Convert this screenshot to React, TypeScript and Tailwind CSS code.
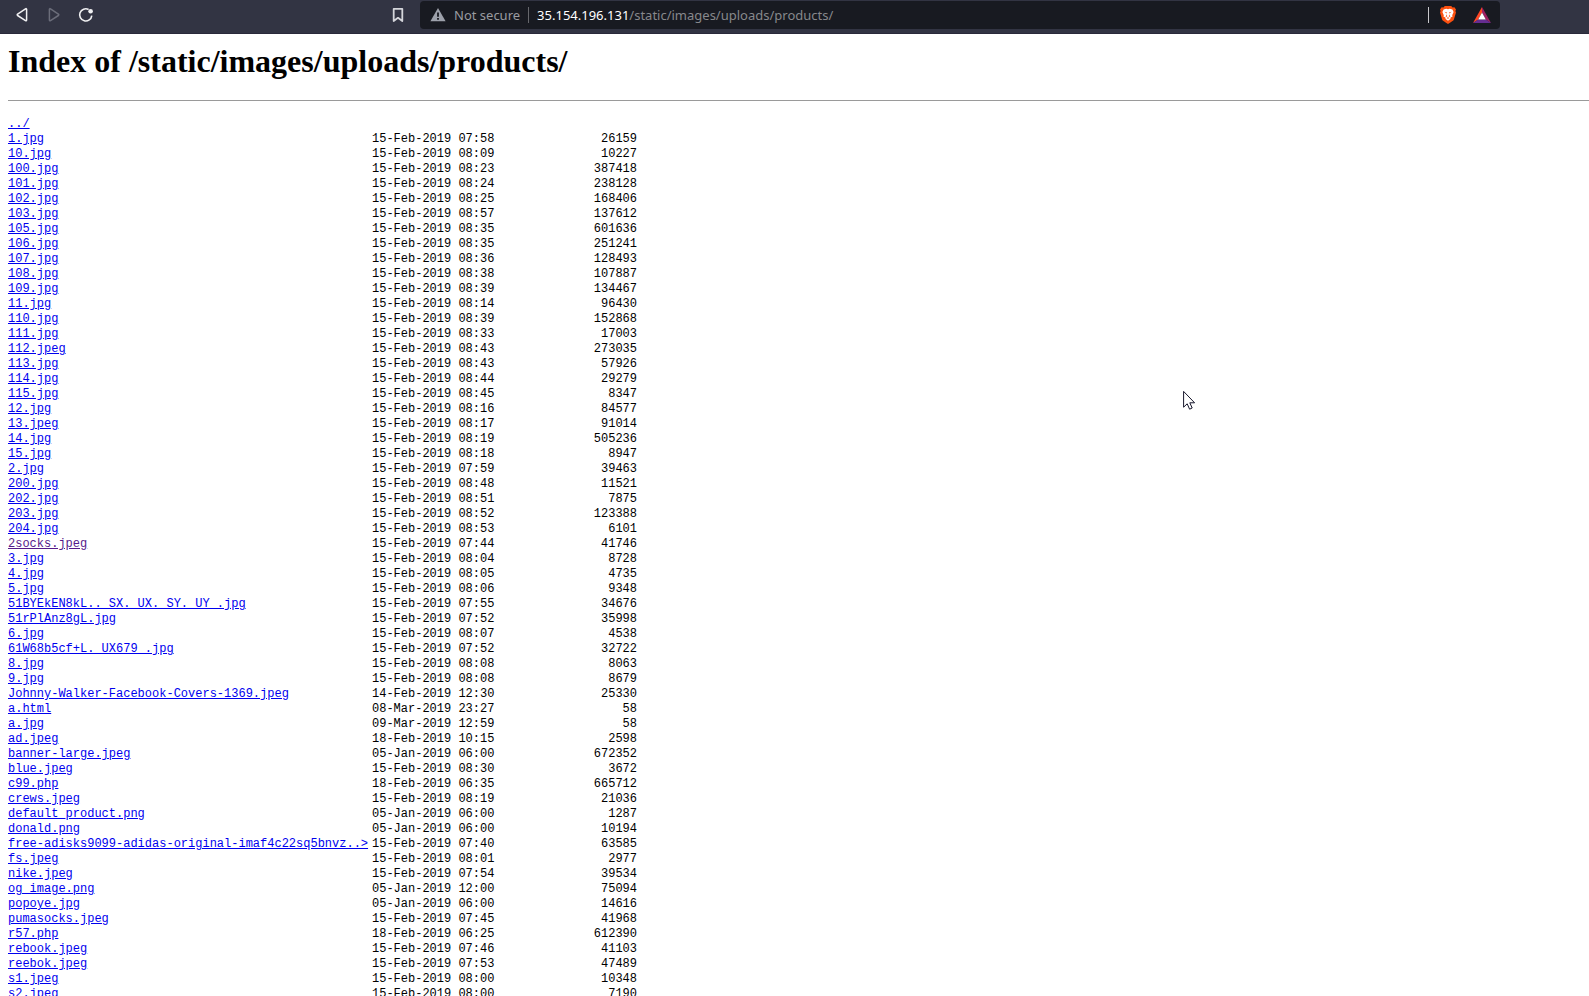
type Entry = [name: string, date: string, size: string];

const entries: Entry[] = [
  ["1.jpg", "15-Feb-2019 07:58", "26159"],
  ["10.jpg", "15-Feb-2019 08:09", "10227"],
  ["100.jpg", "15-Feb-2019 08:23", "387418"],
  ["101.jpg", "15-Feb-2019 08:24", "238128"],
  ["102.jpg", "15-Feb-2019 08:25", "168406"],
  ["103.jpg", "15-Feb-2019 08:57", "137612"],
  ["105.jpg", "15-Feb-2019 08:35", "601636"],
  ["106.jpg", "15-Feb-2019 08:35", "251241"],
  ["107.jpg", "15-Feb-2019 08:36", "128493"],
  ["108.jpg", "15-Feb-2019 08:38", "107887"],
  ["109.jpg", "15-Feb-2019 08:39", "134467"],
  ["11.jpg", "15-Feb-2019 08:14", "96430"],
  ["110.jpg", "15-Feb-2019 08:39", "152868"],
  ["111.jpg", "15-Feb-2019 08:33", "17003"],
  ["112.jpeg", "15-Feb-2019 08:43", "273035"],
  ["113.jpg", "15-Feb-2019 08:43", "57926"],
  ["114.jpg", "15-Feb-2019 08:44", "29279"],
  ["115.jpg", "15-Feb-2019 08:45", "8347"],
  ["12.jpg", "15-Feb-2019 08:16", "84577"],
  ["13.jpeg", "15-Feb-2019 08:17", "91014"],
  ["14.jpg", "15-Feb-2019 08:19", "505236"],
  ["15.jpg", "15-Feb-2019 08:18", "8947"],
  ["2.jpg", "15-Feb-2019 07:59", "39463"],
  ["200.jpg", "15-Feb-2019 08:48", "11521"],
  ["202.jpg", "15-Feb-2019 08:51", "7875"],
  ["203.jpg", "15-Feb-2019 08:52", "123388"],
  ["204.jpg", "15-Feb-2019 08:53", "6101"],
  ["2socks.jpeg", "15-Feb-2019 07:44", "41746"],
  ["3.jpg", "15-Feb-2019 08:04", "8728"],
  ["4.jpg", "15-Feb-2019 08:05", "4735"],
  ["5.jpg", "15-Feb-2019 08:06", "9348"],
  ["51BYEkEN8kL.._SX._UX._SY._UY_.jpg", "15-Feb-2019 07:55", "34676"],
  ["51rPlAnz8gL.jpg", "15-Feb-2019 07:52", "35998"],
  ["6.jpg", "15-Feb-2019 08:07", "4538"],
  ["61W68b5cf+L._UX679_.jpg", "15-Feb-2019 07:52", "32722"],
  ["8.jpg", "15-Feb-2019 08:08", "8063"],
  ["9.jpg", "15-Feb-2019 08:08", "8679"],
  ["Johnny-Walker-Facebook-Covers-1369.jpeg", "14-Feb-2019 12:30", "25330"],
  ["a.html", "08-Mar-2019 23:27", "58"],
  ["a.jpg", "09-Mar-2019 12:59", "58"],
  ["ad.jpeg", "18-Feb-2019 10:15", "2598"],
  ["banner-large.jpeg", "05-Jan-2019 06:00", "672352"],
  ["blue.jpeg", "15-Feb-2019 08:30", "3672"],
  ["c99.php", "18-Feb-2019 06:35", "665712"],
  ["crews.jpeg", "15-Feb-2019 08:19", "21036"],
  ["default_product.png", "05-Jan-2019 06:00", "1287"],
  ["donald.png", "05-Jan-2019 06:00", "10194"],
  ["free-adisks9099-adidas-original-imaf4c22sq5bnvz..>", "15-Feb-2019 07:40", "63585"],
  ["fs.jpeg", "15-Feb-2019 08:01", "2977"],
  ["nike.jpeg", "15-Feb-2019 07:54", "39534"],
  ["og_image.png", "05-Jan-2019 12:00", "75094"],
  ["popoye.jpg", "05-Jan-2019 06:00", "14616"],
  ["pumasocks.jpeg", "15-Feb-2019 07:45", "41968"],
  ["r57.php", "18-Feb-2019 06:25", "612390"],
  ["rebook.jpeg", "15-Feb-2019 07:46", "41103"],
  ["reebok.jpeg", "15-Feb-2019 07:53", "47489"],
  ["s1.jpeg", "15-Feb-2019 08:00", "10348"],
  ["s2.jpeg", "15-Feb-2019 08:00", "7190"],
];

const visited = new Set(["2socks.jpeg"]);

function Toolbar() {
  return (
    <header className="flex h-[34px] shrink-0 items-start border-b border-[#29293a] bg-[#323443] pt-px font-['Noto_Sans',sans-serif] text-[13px] leading-7">
      <nav className="flex h-7 w-[420px] shrink-0 items-center pl-[14px]">
        <button aria-label="Back" className="mr-4">
          <svg className="size-4" viewBox="0 0 16 16" fill="none" stroke="#f0f0f2" strokeWidth="1.5" strokeLinejoin="round">
            <path d="M12.6 2.2 V13.2 Q12.4 14.1 11.5 13.6 L3.6 8.5 Q2.8 7.8 3.6 7.1 L11.5 1.8 Q12.4 1.3 12.6 2.2Z" />
          </svg>
        </button>
        <button aria-label="Forward" className="mr-4" disabled>
          <svg className="size-4" viewBox="0 0 16 16" fill="none" stroke="#6b6d7a" strokeWidth="1.5" strokeLinejoin="round">
            <path d="M3.4 2.2 V13.2 Q3.6 14.1 4.5 13.6 L12.4 8.5 Q13.2 7.8 12.4 7.1 L4.5 1.8 Q3.6 1.3 3.4 2.2Z" />
          </svg>
        </button>
        <button aria-label="Reload">
          <svg className="size-4" viewBox="0 0 16 16" fill="none" stroke="#f0f0f2" strokeWidth="1.6">
            <path d="M13.8 8.6 A6.1 6.1 0 1 1 10.6 2.5" />
            <circle cx="12.6" cy="4.2" r="2.3" fill="#f0f0f2" stroke="none" />
          </svg>
        </button>
        <button aria-label="Bookmark this page" className="ml-auto mr-[14px]">
          <svg className="size-4" viewBox="0 0 16 16" fill="none" stroke="#d4d5da" strokeWidth="1.8" strokeLinejoin="round">
            <path d="M3.7 1.8 H12.3 V14 L8 10.8 L3.7 14Z" />
          </svg>
        </button>
      </nav>
      <div className="mr-[89px] flex h-7 flex-1 items-center rounded bg-[#181a21]">
        <button className="ml-2.5 flex items-center gap-2 text-[#9a9ba0]">
          <svg className="size-4" viewBox="0 0 16 16">
            <path d="M8 1 L15.6 14.2 H0.4Z" fill="#9da1ab" />
            <path d="M7.1 5.6 H8.9 V9.8 H7.1Z M7.1 11 H8.9 V12.8 H7.1Z" fill="#181a21" />
          </svg>
          Not secure
        </button>
        <span className="mx-2 h-4 w-px bg-[#66676c]" />
        <label htmlFor="address" className="text-white">35.154.196.131</label>
        <input
          id="address"
          className="h-7 min-w-0 flex-1 bg-transparent text-[#87888c] outline-none"
          defaultValue="/static/images/uploads/products/"
        />
        <span className="h-4 w-px bg-[#c8c8cc]" />
        <button aria-label="Brave Shields" className="ml-[11px]">
          <svg className="h-[18px] w-4" viewBox="0 0 16 18">
            <path d="M4.8 0 H11.2 L12.6 1.5 L14.4 1.3 L16 3.4 L15.4 5 L16 6.4 L13.8 13.8 Q13.4 14.9 8 18 Q2.6 14.9 2.2 13.8 L0 6.4 L.6 5 L0 3.4 L1.6 1.3 L3.4 1.5Z" fill="#fb5010" />
            <path d="M3.6 3.4 L6.2 2.8 L8 3.3 L9.8 2.8 L12.4 3.4 L13.6 6 L12.2 9.2 L12.6 10.6 L10.6 11.6 L10.4 13 L8 14.8 L5.6 13 L5.4 11.6 L3.4 10.6 L3.8 9.2 L2.4 6Z" fill="#fff" />
            <path d="M4.4 5.8 L7 6.4 L6.6 7.4Z M11.6 5.8 L9 6.4 L9.4 7.4Z M6.8 8.2 L7.2 10.4 L5.6 11 M9.2 8.2 L8.8 10.4 L10.4 11 M6.6 12 L8 11.2 L9.4 12 L8 12.8Z" fill="#fb5010" />
          </svg>
        </button>
        <button aria-label="Brave Rewards" className="ml-[17px] mr-[9px]">
          <svg className="h-4 w-[18px]" viewBox="0 0 18 16">
            <path d="M9 0 L0 16 L5.2 12.6 L9 5.6Z" fill="#ff4724" />
            <path d="M9 0 L18 16 L12.8 12.6 L9 5.6Z" fill="#9e1f63" />
            <path d="M0 16 H18 L12.8 12.6 H5.2Z" fill="#662d91" />
            <path d="M9 5.6 L12.8 12.6 H5.2Z" fill="#fff" />
          </svg>
        </button>
      </div>
    </header>
  );
}

export default function App() {
  return (
    <div className="relative flex h-screen flex-col overflow-hidden bg-white text-black">
      <Toolbar />
      <main className="min-h-0 flex-1 overflow-y-auto pl-2 [scrollbar-width:none]">
        <h1 className="mt-[9px] font-['Liberation_Serif',serif] text-[32px] font-bold leading-9">
          Index of /static/images/uploads/products/
        </h1>
        <hr className="mt-[21px] border-t border-[#9a9a9a]" />
        <table className="mt-4 table-fixed border-collapse font-['Liberation_Mono',monospace] text-[12px] leading-[15px]">
          <colgroup>
            <col className="w-[364px]" />
            <col className="w-[140px]" />
            <col className="w-[125px]" />
          </colgroup>
          <tbody>
            <tr>
              <td className="p-0" colSpan={3}>
                <a href="../" className="text-[#0000ee] underline underline-offset-1">../</a>
              </td>
            </tr>
            {entries.map(([name, date, size]) => (
              <tr key={name}>
                <td className="whitespace-nowrap p-0">
                  <a
                    href={name}
                    className={
                      visited.has(name)
                        ? "text-[#551a8b] underline underline-offset-1"
                        : "text-[#0000ee] underline underline-offset-1"
                    }
                  >
                    {name}
                  </a>
                </td>
                <td className="whitespace-nowrap p-0">{date}</td>
                <td className="p-0 text-right">{size}</td>
              </tr>
            ))}
          </tbody>
        </table>
      </main>
      <svg className="pointer-events-none absolute left-[1183px] top-[390px] h-5 w-3" viewBox="0 0 12 20" aria-hidden="true">
        <path d="M.6 1.4 V17.2 L4.2 13.8 L6.6 19.2 L9.2 18 L6.8 12.8 H11.6Z" fill="#fff" stroke="#15152a" strokeWidth="1" />
      </svg>
    </div>
  );
}
